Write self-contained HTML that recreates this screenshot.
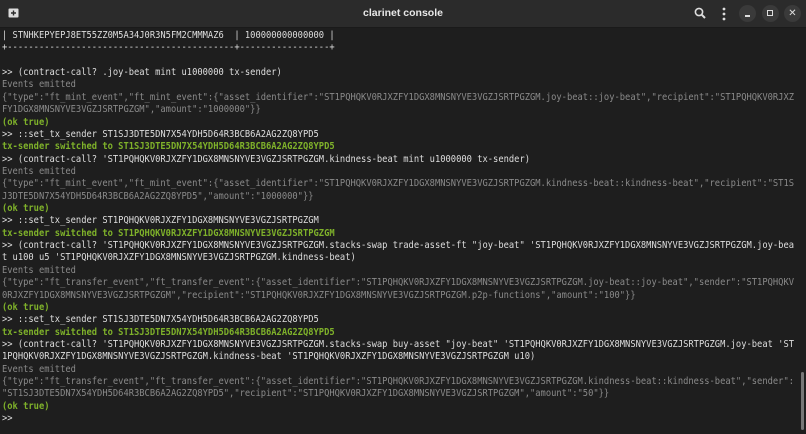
<!DOCTYPE html>
<html><head><meta charset="utf-8"><style>
html,body{margin:0;padding:0;width:806px;height:434px;overflow:hidden;background:#1e1e1e}
.tb{position:absolute;left:0;top:0;width:806px;height:27px;background:#2b2b2b;border-bottom:1px solid #1a1a1a}
.title{position:absolute;left:0;width:806px;top:7px;text-align:center;color:#e8e8e8;font:bold 10.5px "Liberation Sans",sans-serif}
.btn{position:absolute;top:5px;width:17px;height:17px;border-radius:50%;background:#3a3a3a}
pre{position:absolute;left:2px;top:30px;margin:0;font-family:"DejaVu Sans Mono","Liberation Mono",monospace;font-size:10px;line-height:12.36px;color:#dedede;white-space:pre;transform:scaleX(0.877);transform-origin:0 0}
.g{color:#8a8a8a}.k{color:#7fb22a;font-weight:bold}
.sb{position:absolute;left:801px;top:372px;width:3px;height:58px;background:#777;border-radius:2px}
</style></head><body>
<div class="tb">
<svg style="position:absolute;left:8px;top:8px" width="11" height="10" viewBox="0 0 11 10"><rect x="0.5" y="0.5" width="10" height="9" rx="1" fill="#ddd"/><path d="M5.5 2.5v5M3 5h5" stroke="#2b2b2b" stroke-width="1.4"/></svg>
<div class="title">clarinet console</div>
<svg style="position:absolute;left:694px;top:7px" width="13" height="13" viewBox="0 0 13 13"><circle cx="5" cy="5" r="3.6" stroke="#ddd" stroke-width="1.6" fill="none"/><path d="M7.7 7.7L11 11" stroke="#ddd" stroke-width="2"/></svg>
<svg style="position:absolute;left:722px;top:7px" width="4" height="14"><circle cx="2" cy="2" r="1.4" fill="#ddd"/><circle cx="2" cy="7" r="1.4" fill="#ddd"/><circle cx="2" cy="12" r="1.4" fill="#ddd"/></svg>
<div class="btn" style="left:739px"><div style="position:absolute;left:6px;top:10px;width:5px;height:1.5px;background:#ddd"></div></div>
<div class="btn" style="left:762px"><div style="position:absolute;left:5px;top:5px;border:1.3px solid #ddd;box-sizing:content-box;width:4px;height:4px"></div></div>
<div class="btn" style="left:784px;color:#ddd;font:bold 10px 'DejaVu Sans',sans-serif;text-align:center;line-height:17px">✕</div>
</div>
<pre>| STNHKEPYEPJ8ET55ZZ0M5A34J0R3N5FM2CMMMAZ6  | 100000000000000 |
+-------------------------------------------+-----------------+

&gt;&gt; (contract-call? .joy-beat mint u1000000 tx-sender)
<span class="g">Events emitted
{"type":"ft_mint_event","ft_mint_event":{"asset_identifier":"ST1PQHQKV0RJXZFY1DGX8MNSNYVE3VGZJSRTPGZGM.joy-beat::joy-beat","recipient":"ST1PQHQKV0RJXZ
FY1DGX8MNSNYVE3VGZJSRTPGZGM","amount":"1000000"}}</span>
<span class="k">(ok true)</span>
&gt;&gt; ::set_tx_sender ST1SJ3DTE5DN7X54YDH5D64R3BCB6A2AG2ZQ8YPD5
<span class="k">tx-sender switched to ST1SJ3DTE5DN7X54YDH5D64R3BCB6A2AG2ZQ8YPD5</span>
&gt;&gt; (contract-call? 'ST1PQHQKV0RJXZFY1DGX8MNSNYVE3VGZJSRTPGZGM.kindness-beat mint u1000000 tx-sender)
<span class="g">Events emitted
{"type":"ft_mint_event","ft_mint_event":{"asset_identifier":"ST1PQHQKV0RJXZFY1DGX8MNSNYVE3VGZJSRTPGZGM.kindness-beat::kindness-beat","recipient":"ST1S
J3DTE5DN7X54YDH5D64R3BCB6A2AG2ZQ8YPD5","amount":"1000000"}}</span>
<span class="k">(ok true)</span>
&gt;&gt; ::set_tx_sender ST1PQHQKV0RJXZFY1DGX8MNSNYVE3VGZJSRTPGZGM
<span class="k">tx-sender switched to ST1PQHQKV0RJXZFY1DGX8MNSNYVE3VGZJSRTPGZGM</span>
&gt;&gt; (contract-call? 'ST1PQHQKV0RJXZFY1DGX8MNSNYVE3VGZJSRTPGZGM.stacks-swap trade-asset-ft "joy-beat" 'ST1PQHQKV0RJXZFY1DGX8MNSNYVE3VGZJSRTPGZGM.joy-bea
t u100 u5 'ST1PQHQKV0RJXZFY1DGX8MNSNYVE3VGZJSRTPGZGM.kindness-beat)
<span class="g">Events emitted
{"type":"ft_transfer_event","ft_transfer_event":{"asset_identifier":"ST1PQHQKV0RJXZFY1DGX8MNSNYVE3VGZJSRTPGZGM.joy-beat::joy-beat","sender":"ST1PQHQKV
0RJXZFY1DGX8MNSNYVE3VGZJSRTPGZGM","recipient":"ST1PQHQKV0RJXZFY1DGX8MNSNYVE3VGZJSRTPGZGM.p2p-functions","amount":"100"}}</span>
<span class="k">(ok true)</span>
&gt;&gt; ::set_tx_sender ST1SJ3DTE5DN7X54YDH5D64R3BCB6A2AG2ZQ8YPD5
<span class="k">tx-sender switched to ST1SJ3DTE5DN7X54YDH5D64R3BCB6A2AG2ZQ8YPD5</span>
&gt;&gt; (contract-call? 'ST1PQHQKV0RJXZFY1DGX8MNSNYVE3VGZJSRTPGZGM.stacks-swap buy-asset "joy-beat" 'ST1PQHQKV0RJXZFY1DGX8MNSNYVE3VGZJSRTPGZGM.joy-beat 'ST
1PQHQKV0RJXZFY1DGX8MNSNYVE3VGZJSRTPGZGM.kindness-beat 'ST1PQHQKV0RJXZFY1DGX8MNSNYVE3VGZJSRTPGZGM u10)
<span class="g">Events emitted
{"type":"ft_transfer_event","ft_transfer_event":{"asset_identifier":"ST1PQHQKV0RJXZFY1DGX8MNSNYVE3VGZJSRTPGZGM.kindness-beat::kindness-beat","sender":
"ST1SJ3DTE5DN7X54YDH5D64R3BCB6A2AG2ZQ8YPD5","recipient":"ST1PQHQKV0RJXZFY1DGX8MNSNYVE3VGZJSRTPGZGM","amount":"50"}}</span>
<span class="k">(ok true)</span>
&gt;&gt;</pre>
<div class="sb"></div>
</body></html>
